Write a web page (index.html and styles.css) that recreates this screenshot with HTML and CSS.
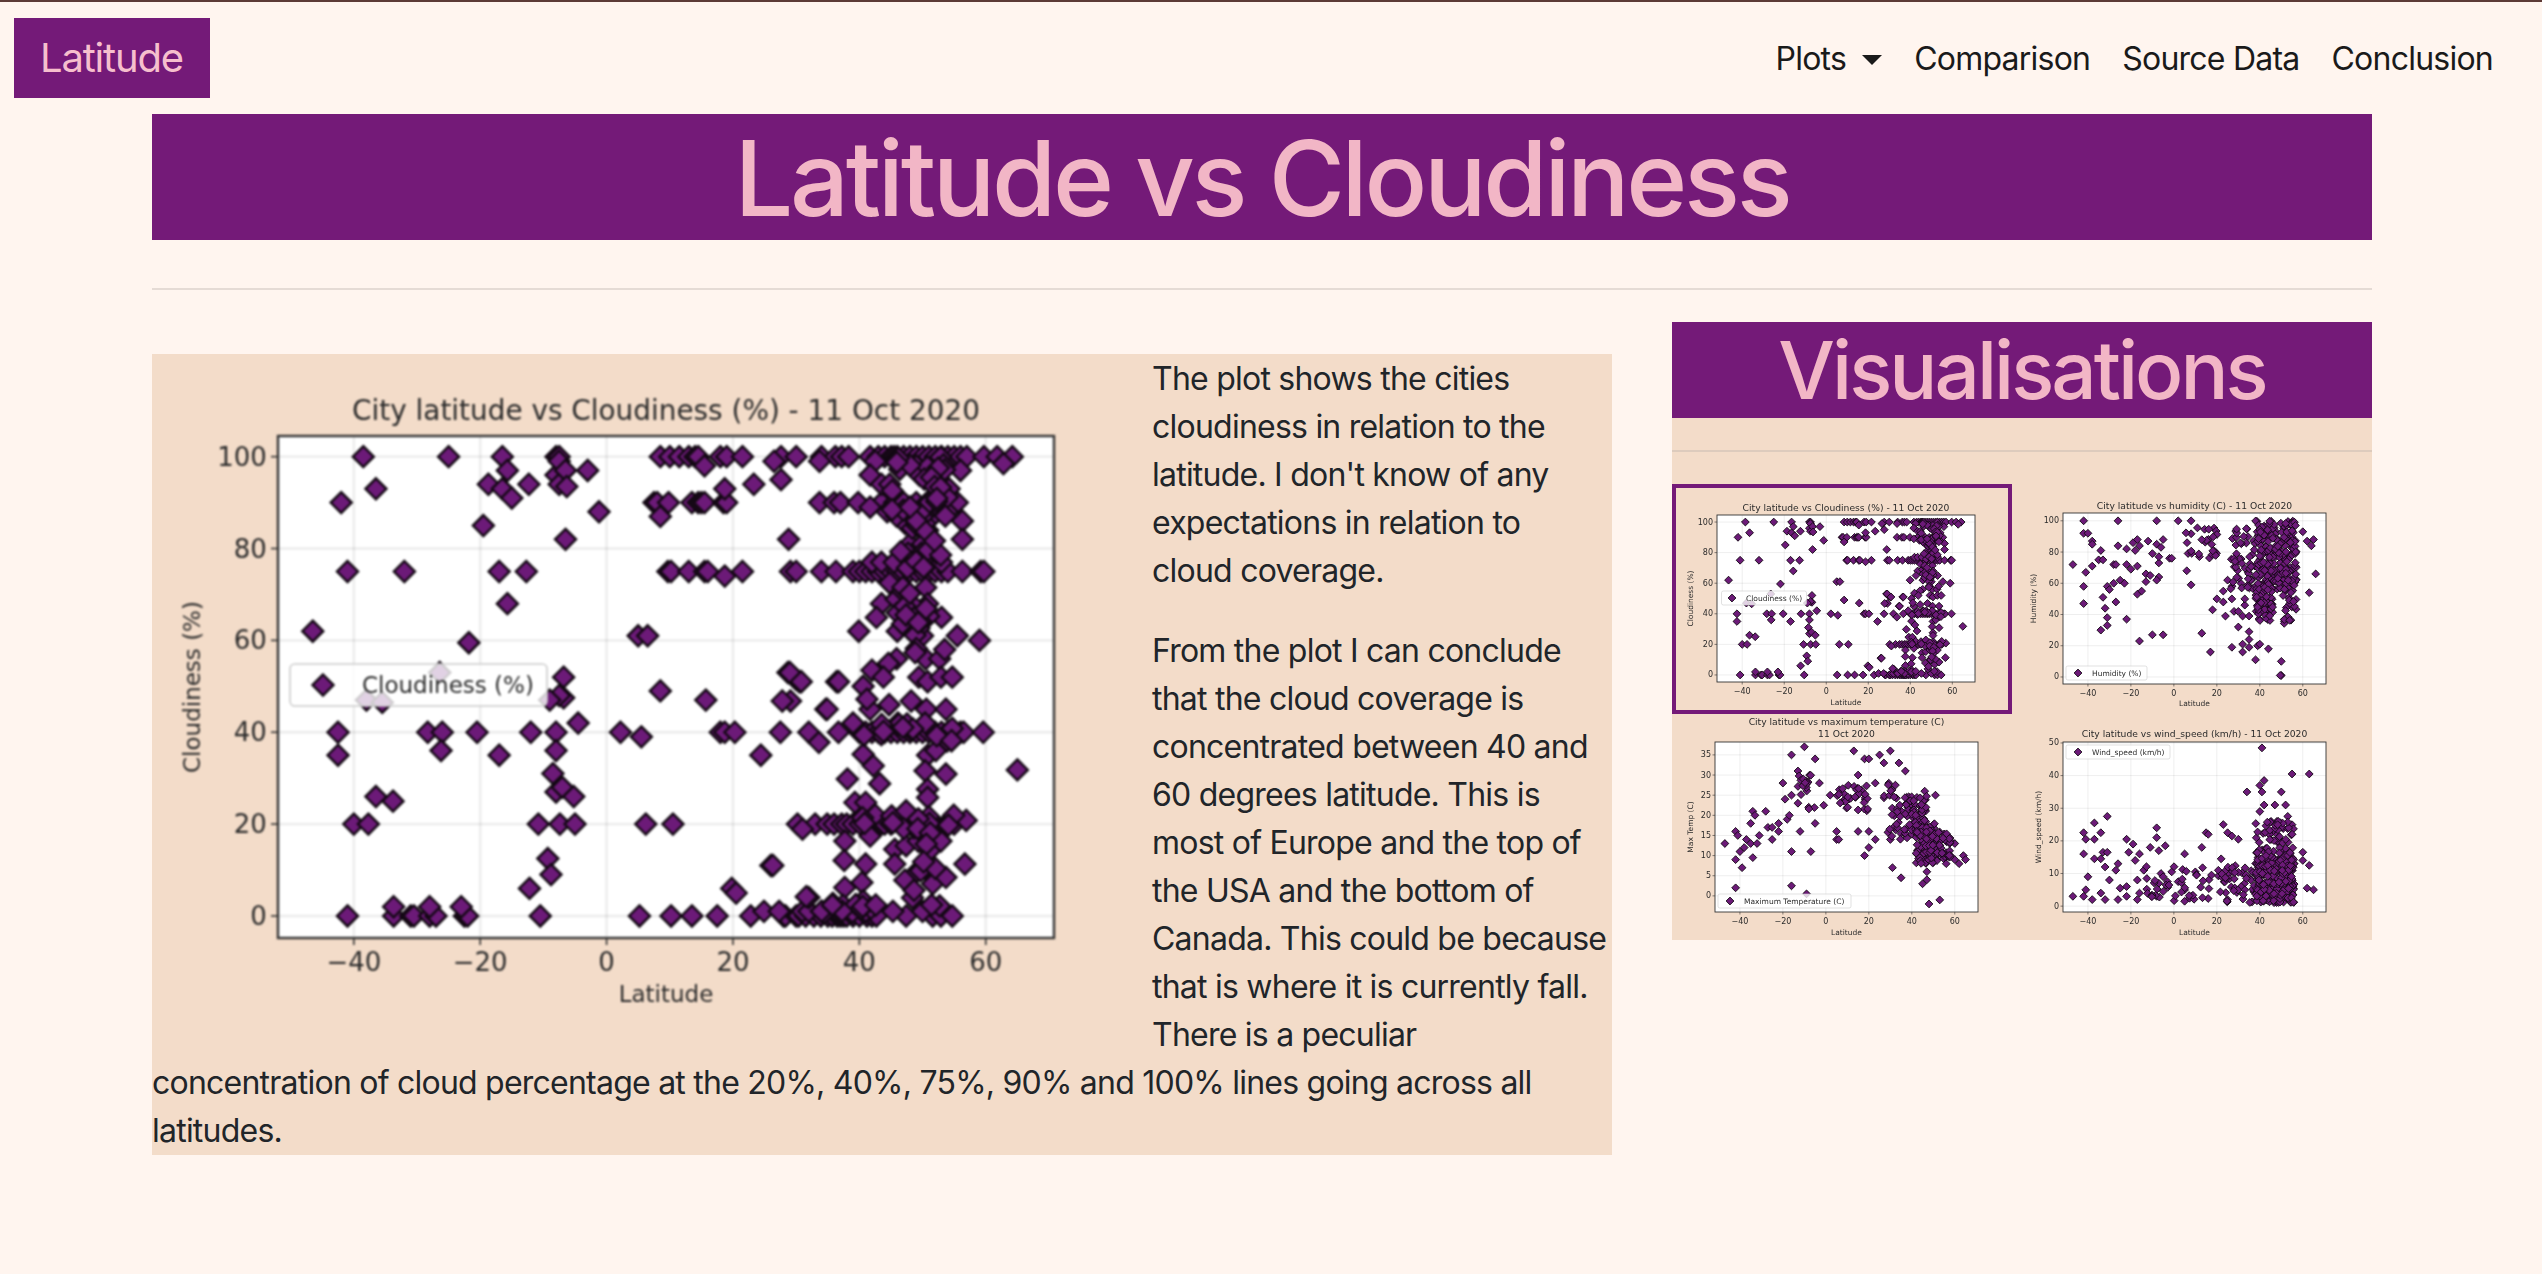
FILE: index.html
```html
<!DOCTYPE html>
<html lang="en">
  <head>
    <meta charset="UTF-8" />
    <meta name="viewport" content="width=device-width, initial-scale=1.0" />
    <title>Latitude vs Cloudiness</title>
    <link rel="stylesheet" href="styles.css">
  </head>
  <body>
    <nav class="navbar">
      <a class="brand" href="#">Latitude</a>
      <ul class="nav-links">
        <li><a class="dropdown-toggle" href="#">Plots</a></li>
        <li><a href="#">Comparison</a></li>
        <li><a href="#">Source Data</a></li>
        <li><a href="#">Conclusion</a></li>
      </ul>
    </nav>

    <main class="container">
      <h1 class="page-title">Latitude vs Cloudiness</h1>
      <hr class="page-rule" />

      <div class="row">
        <section class="content">
          <svg id="main-plot" class="main-plot" width="1000" height="690"></svg>
          <p>The plot shows the cities cloudiness in relation to the latitude. I don't know of any expectations in relation to<br />cloud coverage.</p>
          <p>From the plot I can conclude that the cloud coverage is concentrated between 40 and 60 degrees latitude. This is most of Europe and the top of the USA and the bottom of Canada. This could be because that is where it is currently fall. There is a peculiar concentration of cloud percentage at the 20%, 40%, 75%, 90% and 100% lines going across all latitudes.</p>
        </section>

        <aside class="sidebar">
          <h2 class="side-title">Visualisations</h2>
          <div class="side-body">
            <hr class="side-rule" />
            <div class="thumbs">
              <a class="thumb active" href="#"><svg id="thumb-cloud" width="332" height="222"></svg></a>
              <a class="thumb" href="#"><svg id="thumb-humidity" width="350" height="230"></svg></a>
              <a class="thumb" href="#"><svg id="thumb-temp" width="340" height="226"></svg></a>
              <a class="thumb" href="#"><svg id="thumb-wind" width="350" height="226"></svg></a>
            </div>
          </div>
        </aside>
      </div>
    </main>
    <script src="charts.js"></script>
  </body>
</html>
```

FILE: styles.css
```css
* {
  box-sizing: border-box;
}

body {
  margin: 0;
  min-height: 100vh;
  border-top: 2px solid #5c3a36;
  background-color: #fff5ef;
  color: #212529;
  font-family: Inter, "Liberation Sans", sans-serif;
  font-size: 32px;
  line-height: 1.5;
  letter-spacing: -0.024em;
}

a {
  color: inherit;
  text-decoration: none;
}

.navbar {
  display: flex;
  justify-content: space-between;
  align-items: center;
  padding: 16px 33px 16px 14px;
}

.brand {
  padding: 10px 27px 10px 26px;
  background-color: #741a78;
  color: #f6bfcd;
  font-size: 40px;
  letter-spacing: -0.03em;
}

.nav-links {
  display: flex;
  margin: 0;
  padding: 0;
  list-style: none;
  color: #1a1a1a;
}

.nav-links a {
  display: block;
  padding: 1px 16px 0;
}

.dropdown-toggle::after {
  content: "";
  display: inline-block;
  margin-left: 16px;
  vertical-align: 5px;
  border-top: 10px solid #1a1a1a;
  border-left: 10px solid transparent;
  border-right: 10px solid transparent;
}

.container {
  padding: 0 170px 0 152px;
}

.page-title {
  margin: 0;
  padding-top: 1px;
  height: 126px;
  background-color: #741a78;
  color: #f2b6c6;
  font-size: 104px;
  font-weight: 500;
  line-height: 126px;
  letter-spacing: -0.032em;
  text-align: center;
}

.page-rule {
  height: 2px;
  margin: 48px 0 32px;
  border: 0;
  background-color: #e5dbd5;
}

.row {
  display: flex;
  align-items: flex-start;
  gap: 60px;
}

.content {
  flex: 0 0 1460px;
  margin-top: 32px;
  padding-top: 1px;
  background-color: #f3dcc9;
}

.content::after {
  content: "";
  display: block;
  clear: both;
}

.content p {
  margin: 0 0 32px;
}

.content p:last-of-type {
  margin-bottom: 0;
}

.main-plot {
  display: block;
  float: left;
  margin-top: -1px;
  filter: blur(0.9px);
}

.sidebar {
  flex: 0 0 700px;
}

.side-title {
  margin: 0;
  background-color: #741a78;
  color: #f2b6c6;
  font-size: 80px;
  font-weight: 500;
  line-height: 96px;
  letter-spacing: -0.0375em;
  text-align: center;
}

.side-body {
  padding-top: 32px;
  background-color: #f3dcc9;
}

.side-rule {
  height: 2px;
  margin: 0 0 32px;
  border: 0;
  background-color: #ddcbbd;
}

.thumbs {
  display: grid;
  grid-template-columns: 340px 350px;
  column-gap: 10px;
}

.thumb {
  display: block;
}

.thumb svg {
  display: block;
  letter-spacing: 0;
  filter: blur(0.55px);
}

.thumb.active {
  border: 4px solid #741a78;
}
```

FILE: charts.js
```js
// Scatter plots drawn as svg, points read off the original figures
var NS = "http://www.w3.org/2000/svg";

function el(parent, name, attrs, text) {
  var node = document.createElementNS(NS, name);
  for (var key in attrs) node.setAttribute(key, attrs[key]);
  if (text) node.textContent = text;
  parent.appendChild(node);
  return node;
}

function diamond(parent, x, y, r, sw) {
  var pts = [x, y - r, x + r, y, x, y + r, x - r, y].join(" ");
  el(parent, "polygon", { points: pts, fill: "#6c1a78", stroke: "#120812", "stroke-width": sw });
}

function ticksFor(min, max, step) {
  var out = [];
  for (var v = Math.ceil(min / step) * step; v <= max; v += step) out.push(v);
  return out;
}

function label(v) {
  return v < 0 ? "\u2212" + Math.abs(v) : String(v);
}

function drawPlot(id, o) {
  var svg = document.getElementById(id);
  var textColor = "#2b2b2b";
  var font = "DejaVu Sans";
  var sx = function (v) { return o.box[0] + ((v - o.xlim[0]) / (o.xlim[1] - o.xlim[0])) * (o.box[2] - o.box[0]); };
  var sy = function (v) { return o.box[3] - ((v - o.ylim[0]) / (o.ylim[1] - o.ylim[0])) * (o.box[3] - o.box[1]); };
  var txt = function (x, y, s, size, anchor, extra) {
    var attrs = { x: x, y: y, "font-family": font, "font-size": size, fill: textColor, "text-anchor": anchor, "dominant-baseline": "central", "letter-spacing": 0 };
    for (var k in extra) attrs[k] = extra[k];
    return el(svg, "text", attrs, s);
  };

  el(svg, "rect", { x: o.box[0], y: o.box[1], width: o.box[2] - o.box[0], height: o.box[3] - o.box[1], fill: "#fff" });

  var xticks = ticksFor(-40, 60, 20);
  var yticks = ticksFor(o.ylim[0], o.ylim[1], o.ystep);
  xticks.forEach(function (v) {
    el(svg, "line", { x1: sx(v), x2: sx(v), y1: o.box[1], y2: o.box[3], stroke: "#000", "stroke-opacity": 0.08, "stroke-width": o.sw });
    el(svg, "line", { x1: sx(v), x2: sx(v), y1: o.box[3], y2: o.box[3] + o.tick, stroke: "#333", "stroke-width": o.sw / 1.5 });
    txt(sx(v), o.xTickY, label(v), o.tickSize, "middle");
  });
  yticks.forEach(function (v) {
    el(svg, "line", { x1: o.box[0], x2: o.box[2], y1: sy(v), y2: sy(v), stroke: "#000", "stroke-opacity": 0.08, "stroke-width": o.sw });
    el(svg, "line", { x1: o.box[0] - o.tick, x2: o.box[0], y1: sy(v), y2: sy(v), stroke: "#333", "stroke-width": o.sw / 1.5 });
    txt(o.box[0] - o.tick - o.tick * 0.6, sy(v), label(v), o.tickSize, "end");
  });

  o.points.forEach(function (p) {
    diamond(svg, sx(p[0]), sy(p[1]), o.r, o.sw);
  });

  el(svg, "rect", { x: o.box[0], y: o.box[1], width: o.box[2] - o.box[0], height: o.box[3] - o.box[1], fill: "none", stroke: "#333", "stroke-width": o.sw });

  var cx = (o.box[0] + o.box[2]) / 2;
  o.title.forEach(function (line) {
    txt(cx, line[1], line[0], o.titleSize, "middle");
  });
  txt(cx, o.xLabelY, "Latitude", o.axisSize, "middle");
  txt(o.yLabelX, (o.box[1] + o.box[3]) / 2, o.ylabel, o.axisSize, "middle", {
    transform: "rotate(-90 " + o.yLabelX + " " + (o.box[1] + o.box[3]) / 2 + ")"
  });

  var lg = o.legend;
  el(svg, "rect", { x: lg.x, y: lg.y, width: lg.w, height: lg.h, rx: o.sw * 2, fill: "#fff", "fill-opacity": 0.8, stroke: "#ccc", "stroke-width": o.sw / 1.5 });
  diamond(svg, lg.mx, lg.y + lg.h / 2, o.r, o.sw);
  txt(lg.tx, lg.y + lg.h / 2, lg.text, o.axisSize, "start");
}

// simple seeded random so the clusters stay the same on every load
var seed = 42;
function rnd() {
  seed = (seed * 1664525 + 1013904223) % 4294967296;
  return seed / 4294967296;
}

function cluster(n, x0, x1, y0, y1) {
  var out = [];
  for (var i = 0; i < n; i++) out.push([x0 + rnd() * (x1 - x0), y0 + rnd() * (y1 - y0)]);
  return out;
}

function row(y, xs) {
  return xs.map(function (x) { return [x, y]; });
}

var cloudPoints = [].concat(
  row(100, [-38.5, -25, -16.5, -8, -7.5, 8.5, 10, 11.5, 13, 14, 14.5, 18, 19, 21.5, 27.6, 30, 34, 36.2, 37.2, 38.3, 41.7,
    43, 44, 45, 45.5, 46, 47, 48, 49, 50, 51, 52, 53, 54, 55, 56, 57, 59.7, 61.8, 64.2]),
  row(90, [-42, 7.5, 8, 9.8, 13.5, 14.5, 15, 15.5, 18.5, 19, 33.7, 36, 37, 39.8, 43.5, 45.6, 49, 50.7, 55.5, 47, 52]),
  row(75, [-41, -32, -17, -12.7, 9.7, 10.2, 13, 15.5, 16, 21.5, 29.1, 30, 34, 36.3, 39, 40, 41, 42, 43, 44, 45, 46, 47, 48, 49, 50, 51, 52, 53, 54, 56.3, 59.2, 59.7]),
  row(40, [-42.5, -28.3, -26, -20.5, -12, -8, 2.2, 18, 18.7, 20.3, 27.5, 32, 36.7, 40, 41, 42, 43, 44, 45, 46, 47, 48, 49, 50, 51, 52, 53, 54, 55, 56, 56.5, 59.6]),
  row(20, [-40, -37.7, -10.8, -7.4, -5, 6.2, 10.5, 30.2, 33, 34.9, 36, 37.2, 38, 39, 40.1, 41.2, 42, 43.5, 44, 45, 46.9, 48, 49, 50, 51.1, 52, 53.7, 54, 55]),
  row(0, [-41, -33.7, -31, -30.5, -28, -27, -22.5, -22, -10.5, 5.2, 10.2, 13.5, 17.5, 22.8, 28, 28.3, 30, 30.4, 31.5, 32.8, 33.9, 35, 35.7, 36.5, 37, 37.5, 38, 39, 40, 41.2, 42, 42.7, 47.4, 51.6, 52.9, 54.7]),
  [
    [-46.5, 62], [-36.5, 93], [-19.5, 85], [-18.7, 94], [-16.5, 93], [-15.7, 97], [-15.7, 68], [-15, 91], [-12.3, 94],
    [-8, 96], [-7.5, 94], [-7.5, 99], [-6.5, 97], [-6.3, 93.5], [-6.5, 82], [-3, 97], [-1.2, 88], [-21.8, 59.5], [5, 61], [6.5, 61],
    [8.5, 49], [-6.8, 52], [-6.8, 47.5], [-7.5, 48], [-9, 47], [-26.4, 53], [-38, 47], [-35.5, 46.5],
    [-42.5, 35], [-26.2, 36], [-17, 35], [-8, 36], [-4.5, 42], [5.5, 39], [-8.5, 31], [-8, 27], [-7, 28], [-5.2, 26], [-36.5, 26], [-33.8, 25],
    [-9.3, 12.5], [-8.8, 9], [-12.2, 6], [-33.7, 2], [-28, 2], [-23, 2], [8.5, 87], [15.5, 98], [18.7, 93], [23.3, 94], [18.7, 74],
    [15.7, 47], [24.4, 35], [28.7, 53], [30, 51.5], [30.5, 51], [34.7, 45], [36.4, 51],
    [19.8, 6], [20.5, 5], [26, 11], [26.3, 11], [24.9, 1], [27.3, 1], [31, 1], [32, 1], [32, 4], [34, 1], [36, 1.5], [38, 1.5], [40, 2], [41, 1], [45.3, 1], [50, 1],
    [26.5, 99], [33.7, 99], [42.5, 99], [62.8, 98.5], [27.6, 95], [28.8, 82], [41.7, 96], [43.5, 94], [44.8, 94], [49, 98], [49.5, 96], [51.6, 94], [54.2, 93], [56, 97],
    [41.7, 89], [44.4, 88], [53.4, 91], [50, 88], [53.9, 88], [51.6, 87], [56.3, 86], [49, 85], [50.8, 84], [56.3, 82], [48, 81], [50, 81], [47.7, 79], [49.8, 79],
    [42, 77], [43.5, 77], [45.5, 77], [48.2, 77], [50.7, 77], [53, 77], [44.8, 72.5], [50.5, 71.5], [43.5, 68], [45.8, 69], [50.8, 68], [49, 67], [46, 66], [53, 65], [42.7, 65],
    [48.7, 63], [39.9, 62], [46, 62], [50, 61], [55.5, 61], [59, 60], [50.5, 56], [52.7, 56], [53.5, 58], [45.9, 56], [44.6, 55], [42, 53.5], [43.8, 52], [29, 53], [30.8, 51], [36.7, 51],
    [40.6, 50], [49.4, 52], [50.8, 51], [52.9, 52], [54.7, 52],
    [29.1, 46.8], [27.8, 46.8], [34.9, 45], [41.7, 45], [41.2, 47.2], [44.7, 46], [48.2, 46.8], [50.6, 45], [53.7, 45], [33.6, 37.8], [39, 42], [46.1, 42], [50.4, 42],
    [40.6, 35.2], [42.2, 32.7], [50.8, 35], [52.1, 36], [50.4, 31.6], [53.7, 30.9], [65, 31.8], [38.1, 29.8], [43.2, 28.8], [50.8, 27.6], [50.8, 25.8], [39.3, 24.7], [41, 24.7],
    [31, 18.9], [56.9, 20.8], [42.5, 22], [45.1, 21.8], [47.4, 22.9], [37.7, 16.3], [41.7, 17.4], [45.6, 14.5], [47.4, 15.3], [49.3, 16.3], [51.1, 14.2], [52.9, 16.3],
    [37.6, 12.1], [41, 11.3], [45.6, 11.3], [56.7, 11.3], [48.7, 9.1], [47.2, 7.8], [51.6, 7], [53.7, 8.4], [50, 10.5], [37.7, 6.2], [40.4, 7.3], [31.6, 4.2], [40.6, 3.3], [52.7, 2.2]
  ],
  cluster(34, 45, 54, 84, 100),
  cluster(24, 46, 53, 57, 84),
  cluster(14, 40, 55, 38, 42),
  cluster(14, 40, 55, 18, 22),
  cluster(8, 48, 54, 2, 16),
  cluster(14, 33, 43, 0, 3)
);

var humidityPoints = [].concat(
  [
    [-47, 72], [-42, 100], [-42, 92], [-40, 92], [-38, 87], [-38, 85], [-41, 67], [-42, 58], [-42, 47], [-38, 71], [-35, 75], [-34, 81], [-33, 75],
    [-31, 58], [-30, 56], [-33, 51], [-32, 44], [-31, 38], [-31, 33], [-34, 30], [-28, 72], [-27, 72], [-26, 84], [-26, 100], [-28, 60], [-25, 62], [-23, 60], [-22, 72],
    [-27, 48], [-22, 37], [-22, 82], [-20, 69], [-19, 86], [-18, 81], [-17, 88], [-16, 84], [-17, 71], [-17, 53], [-15, 55], [-16, 23], [-13, 61], [-13, 66], [-11, 65], [-10, 27], [-5, 27],
    [-8, 100], [-12, 87], [-10, 79], [-8, 85], [-7, 73], [-7, 77], [-7, 64], [-5, 88], [-6, 83], [-8, 62], [-2, 76], [-1, 76], [2, 100], [8, 100], [13, 28], [17, 16], [8, 59], [6, 68],
    [25, 62], [23, 55], [18, 43], [20, 50], [23, 48], [24, 39], [27, 50], [28, 42], [30, 32], [32, 21], [35, 24], [32, 16], [27, 19], [35, 19], [38, 11], [39, 20], [40, 21], [44, 18],
    [50, 10], [50, 1], [49.5, 1], [35, 29], [30, 42], [32, 39], [35, 39], [33, 46], [33, 50], [35, 58], [63, 54], [66, 66], [62, 87], [60, 93], [64, 84], [65, 88]
  ],
  cluster(26, 4, 22, 76, 96),
  cluster(50, 26, 38, 55, 95),
  cluster(240, 38, 57, 55, 100),
  cluster(80, 38, 46, 36, 60),
  cluster(20, 50, 57, 34, 55)
);

var tempPoints = [].concat(
  [
    [-47, 13], [-42, 16], [-42, 9], [-42, 2], [-41, 15], [-40, 11], [-39, 7], [-38, 12], [-37, 14], [-35, 13], [-35, 18], [-34, 21], [-33, 20], [-34, 9.5], [-32, 13], [-31, 15], [-28, 21], [-27, 17], [-25, 17], [-25, 14],
    [-22, 16], [-22, 18], [-20, 28], [-19, 24], [-18, 19], [-17, 20], [-16, 11], [-16, 2.5], [-16, 35], [-16, 25], [-13, 31], [-13, 23], [-12, 16], [-10, 37], [-9, 0.5], [-8, 22], [-7, 11], [-5, 34], [-5, 18], [-3, 28], [-1, 22.5],
    [2, 25], [5, 14], [5, 16], [6, 14], [13, 36], [15, 30], [15, 16], [18, 34], [18, 10], [20, 34], [20, 16], [20, 12], [23, 28], [23, 14], [25, 35], [27, 33], [30, 36], [30, 14], [31, 7], [34, 33], [35, 4.5], [37, 31],
    [45, 3], [48, -2], [53, -1], [62, 8], [64, 10], [65, 9], [60, 13], [56, 8], [46, 26], [51, 25], [47, 6], [47, 4], [60, 9]
  ],
  cluster(18, -13, -5, 21, 30),
  cluster(35, 5, 20, 21, 28),
  cluster(30, 27, 38, 14, 28),
  cluster(70, 36, 47, 15, 25),
  cluster(110, 42, 52, 8, 18),
  cluster(50, 46, 58, 9, 16)
);

var windPoints = [].concat(
  [
    [-47, 3], [-42, 22.5], [-41, 20.5], [-42, 16], [-41, 5], [-42, 3], [-40, 9], [-37, 25.5], [-37, 20.5], [-38, 2], [-37, 14.5], [-34, 22.5], [-34, 14.5], [-34, 4], [-33, 16.5], [-31, 27.5], [-31, 16.5], [-32, 12], [-32, 2], [-30, 8],
    [-27, 11], [-26, 13], [-25, 5.5], [-26, 2], [-22, 20.5], [-21, 16.5], [-22, 6], [-22, 3], [-19, 19], [-18, 14], [-16, 16], [-17, 8], [-16, 4], [-17, 2], [-14, 11], [-11, 18], [-8, 24], [-8, 21], [-7, 17], [-8, 3],
    [-7, 7], [-6, 10], [-5, 9], [-4, 18.5], [-3, 7.5], [-1, 10.5], [2, 7.5], [5, 16], [5, 5], [5, 1.5], [8, 3], [10, 10.5], [13, 18], [15, 22.5], [16, 22], [22, 14.5], [23, 25], [25, 22.5], [27, 21.5], [30, 20.5],
    [34, 35], [41, 48.5], [40, 37], [42, 38.5], [41, 35], [55, 40.5], [63, 40.5], [50, 35], [47, 31], [52, 31], [42, 31], [40, 29], [53, 27.5], [48, 26], [60, 14], [63, 12.5], [65, 5], [62, 5.5], [60, 16.5]
  ],
  cluster(50, -14, 30, 1, 14),
  cluster(35, 22, 38, 1, 12),
  cluster(300, 38, 56, 1, 15),
  cluster(70, 38, 56, 15, 26)
);

var cloudTitle = "City latitude vs Cloudiness (%) - 11 Oct 2020";

drawPlot("main-plot", {
  box: [126, 82, 902, 584], xlim: [-52, 70.8], ylim: [-4.8, 104.5], ystep: 20,
  r: 10.5, sw: 2.4, tick: 7, tickSize: 26, axisSize: 23, titleSize: 27.9,
  xTickY: 608, xLabelY: 640, yLabelX: 40,
  title: [[cloudTitle, 56]], ylabel: "Cloudiness (%)",
  points: cloudPoints,
  legend: { x: 138, y: 310, w: 257, h: 42, mx: 171, tx: 210, text: "Cloudiness (%)" }
});

drawPlot("thumb-cloud", {
  box: [41, 27, 299, 194], xlim: [-52, 70.8], ylim: [-4.6, 104.6], ystep: 20,
  r: 3.9, sw: 0.9, tick: 2.5, tickSize: 8, axisSize: 7.5, titleSize: 9.2,
  xTickY: 203, xLabelY: 214, yLabelX: 14,
  title: [[cloudTitle, 19]], ylabel: "Cloudiness (%)",
  points: cloudPoints,
  legend: { x: 45.5, y: 103, w: 85, h: 14, mx: 56, tx: 70, text: "Cloudiness (%)" }
});

drawPlot("thumb-humidity", {
  box: [41, 29, 304, 200], xlim: [-51.6, 70.8], ylim: [-4.5, 105], ystep: 20,
  r: 3.9, sw: 0.9, tick: 2.5, tickSize: 8, axisSize: 7.5, titleSize: 9.2,
  xTickY: 209, xLabelY: 219, yLabelX: 11,
  title: [["City latitude vs humidity (C) - 11 Oct 2020", 21]], ylabel: "Humidity (%)",
  points: humidityPoints,
  legend: { x: 44, y: 182, w: 81, h: 14, mx: 56, tx: 70, text: "Humidity (%)" }
});

drawPlot("thumb-temp", {
  box: [43, 28, 306, 198], xlim: [-51.6, 70.8], ylim: [-4, 38.2], ystep: 5,
  r: 3.9, sw: 0.9, tick: 2.5, tickSize: 8, axisSize: 7.5, titleSize: 9.2,
  xTickY: 207, xLabelY: 218, yLabelX: 18,
  title: [["City latitude vs maximum temperature (C)", 7], ["11 Oct 2020", 19]], ylabel: "Max Temp (C)",
  points: tempPoints,
  legend: { x: 46, y: 180, w: 133, h: 14, mx: 58, tx: 72, text: "Maximum Temperature (C)" }
});

drawPlot("thumb-wind", {
  box: [41, 28, 304, 198], xlim: [-51.6, 70.8], ylim: [-1.8, 50.3], ystep: 10,
  r: 3.9, sw: 0.9, tick: 2.5, tickSize: 8, axisSize: 7.5, titleSize: 9.2,
  xTickY: 207, xLabelY: 218, yLabelX: 16,
  title: [["City latitude vs wind_speed (km/h) - 11 Oct 2020", 19]], ylabel: "Wind_speed (km/h)",
  points: windPoints,
  legend: { x: 44, y: 31, w: 104, h: 14, mx: 56, tx: 70, text: "Wind_speed (km/h)" }
});
```
